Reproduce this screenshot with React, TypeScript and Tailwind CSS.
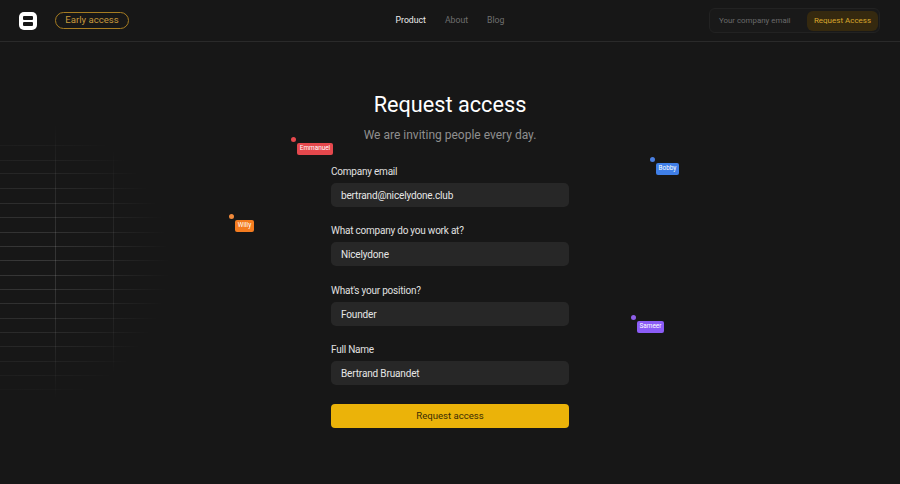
const font = "font-['Roboto',sans-serif]";

const fields = [
  { label: "Company email", value: "bertrand@nicelydone.club" },
  { label: "What company do you work at?", value: "Nicelydone" },
  { label: "What's your position?", value: "Founder" },
  { label: "Full Name", value: "Bertrand Bruandet" },
];

const cursors = [
  { name: "Emmanuel", dot: "left-[291px] top-[137px] bg-[#e5484d]", tag: "left-[297px] top-[143px] w-[36px] bg-[#e5484d]" },
  { name: "Willy", dot: "left-[229px] top-[214px] bg-[#f08a3c]", tag: "left-[235px] top-[220px] w-[19px] bg-[#f47c20]" },
  { name: "Bobby", dot: "left-[650px] top-[157px] bg-[#4a7fe0]", tag: "left-[656px] top-[163px] w-[23px] bg-[#3f7fe8]" },
  { name: "Sameer", dot: "left-[631px] top-[315px] bg-[#8e5fe8]", tag: "left-[637px] top-[321px] w-[27px] bg-[#8b5cf6]" },
];

const gridRows = [145, 160, 173, 188, 203, 217, 232, 246, 260, 275, 289, 303, 318, 332, 346, 361, 375, 389];

function GridLines() {
  return (
    <svg className="absolute left-0 top-[120px]" width="180" height="290" viewBox="0 120 180 290">
      <defs>
        <radialGradient id="fade" gradientUnits="userSpaceOnUse" cx="30" cy="262" r="140">
          <stop offset="0" stopColor="#fff" stopOpacity="0.15" />
          <stop offset="0.55" stopColor="#fff" stopOpacity="0.08" />
          <stop offset="1" stopColor="#fff" stopOpacity="0" />
        </radialGradient>
      </defs>
      {gridRows.map((y) => (
        <rect key={y} x="0" y={y} width="180" height="1" fill="url(#fade)" />
      ))}
      <rect x="55" y="125" width="1" height="275" fill="url(#fade)" />
      <rect x="113" y="130" width="1" height="270" fill="url(#fade)" />
    </svg>
  );
}

export default function App() {
  return (
    <div className={`relative h-[484px] w-[900px] overflow-hidden bg-[#171717] ${font}`}>
      <GridLines />

      {/* HEADER */}
      <header className="relative grid h-[42px] grid-cols-3 items-center border-b border-[#2a2a2a] pl-[19px] pr-5">
        <div className="flex items-center gap-[18px]">
          <div className="flex h-[18px] w-[18px] flex-col items-center justify-center gap-[2px] rounded-[5px] bg-white">
            <span className="h-[4px] w-[10px] rounded-[1px] bg-[#171717]" />
            <span className="h-[4px] w-[10px] rounded-[1px] bg-[#171717]" />
          </div>
          <div className="flex h-[17px] w-[74px] items-center justify-center rounded-full border border-[#a67c22] text-[9.6px] text-[#c79a3c]">
            Early access
          </div>
        </div>

        <nav className="flex items-center justify-center gap-[19px] pl-[1px] text-[8.7px]">
          <span className="text-[#eeeeee]">Product</span>
          <span className="text-[#6f6f6f]">About</span>
          <span className="text-[#6f6f6f]">Blog</span>
        </nav>

        <div className="flex justify-end">
          <div className="flex h-[25px] w-[171px] items-center justify-between rounded-md border border-[#222222] bg-[#191919] pl-[9px] pr-[1px]">
            <span className="text-[7.9px] text-[#6a6a6a]">Your company email</span>
            <span className="flex h-[20px] w-[71px] items-center justify-center rounded-md bg-[#35290f] text-[8px] text-[#d9a72c]">
              Request Access
            </span>
          </div>
        </div>
      </header>

      {/* FORM */}
      <main className="relative mx-auto flex w-[238px] flex-col items-center pt-[48px]">
        <h1 className="whitespace-nowrap text-[21.7px] leading-[30px] text-white">Request access</h1>
        <p className="mt-[7px] whitespace-nowrap text-[12px] leading-[16px] text-[#8f8f8f]">
          We are inviting people every day.
        </p>

        <div className="mt-[22px] flex w-full flex-col gap-[17.33px]">
          {fields.map((f) => (
            <div key={f.label} className="flex flex-col gap-[4px]">
              <label className="text-[10px] leading-[14px] tracking-[-0.22px] text-[#e0e0e0]">{f.label}</label>
              <div className="flex h-[24px] items-center rounded-[5px] bg-[#272727] px-[10px] pt-[1px] text-[10px] tracking-[-0.15px] text-[#e6e6e6]">
                {f.value}
              </div>
            </div>
          ))}
        </div>

        <button className="mt-[19px] h-[24px] w-full rounded-[4px] bg-[#ebb309] pt-[1px] text-[9.6px] text-[#3a2c05]">
          Request access
        </button>
      </main>

      {/* CURSORS */}
      {cursors.map((c) => (
        <div key={c.name}>
          <span className={`absolute h-[5px] w-[5px] rounded-full ${c.dot}`} />
          <span className={`absolute flex h-[12px] items-center justify-center rounded-[2px] text-[6.4px] text-white ${c.tag}`}>
            {c.name}
          </span>
        </div>
      ))}
    </div>
  );
}
